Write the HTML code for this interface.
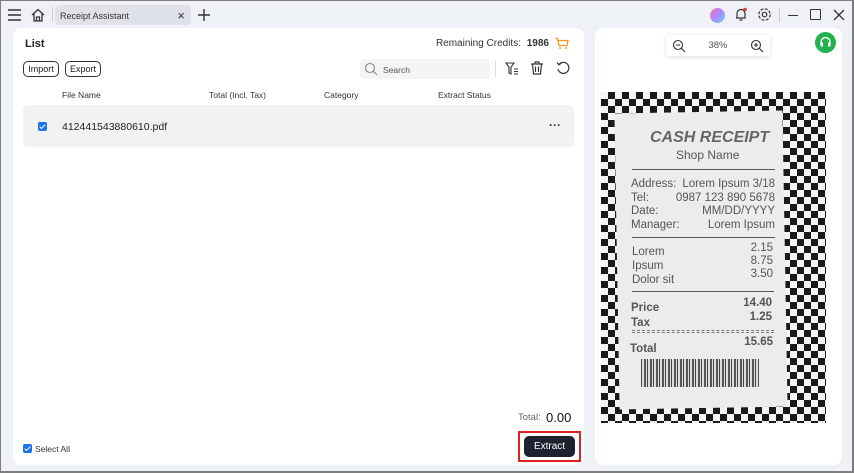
<!DOCTYPE html>
<html><head><style>
*{box-sizing:border-box;margin:0;padding:0}
body{width:854px;height:473px;overflow:hidden;font-family:"Liberation Sans",sans-serif;background:#7d7d7d;position:relative}
.win{position:absolute;left:1px;top:1px;width:851px;height:470px;background:#eef1f6}
.abs{position:absolute}
.panel{position:absolute;background:#fff;border-radius:8px}
.btn{position:absolute;border:1px solid #333;border-radius:5px;font-size:9px;color:#222;height:16px;line-height:14px;text-align:center}
.hdr{position:absolute;top:90px;font-size:8.5px;color:#333}
svg{position:absolute}
.chk{position:absolute;width:9px;height:9px;background:#1a73e8;border-radius:2px}
.chk:after{content:"";position:absolute;left:3px;top:1px;width:2px;height:5px;border:solid #fff;border-width:0 1.5px 1.5px 0;transform:rotate(45deg)}
.rc{position:absolute;font-family:"Liberation Sans",sans-serif;color:#555;font-size:11.5px}
</style></head><body>
<div class="win"></div>
<svg style="left:8px;top:9px" width="14" height="12"><path d="M0 1H13M0 6H13M0 11H13" stroke="#333" stroke-width="1.4"/></svg>
<svg style="left:31px;top:8px" width="14" height="14"><path d="M1 7L7 1.5L13 7M3 5.5V13H11V5.5M5.5 13V9H8.5V13" fill="none" stroke="#333" stroke-width="1.3"/></svg>
<div class="abs" style="left:52px;top:7px;width:1px;height:15px;background:#ccc"></div>
<div class="abs" style="left:55px;top:5px;width:136px;height:20px;background:#dfe2e8;border-radius:5px;font-size:9px;color:#333;padding:6px 0 0 5px">Receipt Assistant<span style="position:absolute;right:6px;top:3px;font-size:13px">×</span></div>
<svg style="left:197px;top:8px" width="14" height="14"><path d="M7 1V13M1 7H13" stroke="#333" stroke-width="1.4"/></svg>
<div class="abs" style="left:710px;top:8px;width:15px;height:15px;border-radius:50%;background:linear-gradient(135deg,#f7a,#a8f,#7cf)"></div>
<svg style="left:734px;top:7px" width="14" height="15"><path d="M3 11V6.5A4 4 0 0 1 11 6.5V11H2M5.5 13H8.5" fill="none" stroke="#333" stroke-width="1.2"/><circle cx="11" cy="2.5" r="1.8" fill="#e33"/></svg>
<svg style="left:757px;top:7px" width="15" height="15"><circle cx="7.5" cy="7.5" r="2.3" fill="none" stroke="#333" stroke-width="1.2"/><circle cx="7.5" cy="7.5" r="5.7" fill="none" stroke="#333" stroke-width="1.2" stroke-dasharray="3 1.5"/></svg>
<div class="abs" style="left:779px;top:8px;width:1px;height:14px;background:#ccc"></div>
<div class="abs" style="left:788px;top:15px;width:10px;height:1.3px;background:#333"></div>
<div class="abs" style="left:810px;top:9px;width:11px;height:11px;border:1.3px solid #333;border-radius:1px"></div>
<svg style="left:833px;top:9px" width="12" height="12"><path d="M1 1L11 11M11 1L1 11" stroke="#333" stroke-width="1.3"/></svg>
<div class="panel" style="left:13px;top:28px;width:571px;height:437px"></div>
<div class="abs" style="left:25px;top:38px;font-size:11px;font-weight:bold;color:#222">List</div>
<div class="abs" style="left:400px;top:38px;width:149px;text-align:right;font-size:10px;color:#333;white-space:nowrap">Remaining Credits: <b style="margin-left:3px">1986</b></div>
<svg style="left:555px;top:37px" width="14" height="13"><path d="M0.5 1.5H2.5L4 8.5H12L13 3.5H3" fill="none" stroke="#f39a1e" stroke-width="1.3"/><circle cx="5" cy="11" r="1" fill="#f39a1e"/><circle cx="11" cy="11" r="1" fill="#f39a1e"/></svg>
<div class="btn" style="left:23px;top:61px;width:36px">Import</div>
<div class="btn" style="left:65px;top:61px;width:36px">Export</div>
<div class="abs" style="left:360px;top:59px;width:130px;height:20px;background:#f3f4f6;border-radius:4px;font-size:8.5px;color:#555;padding:6px 0 0 23px">Search</div>
<svg style="left:364px;top:62px" width="14" height="14"><circle cx="6" cy="6" r="4.5" fill="none" stroke="#888" stroke-width="1.1"/><path d="M9.3 9.3L13 13" stroke="#888" stroke-width="1.1"/></svg>
<div class="abs" style="left:495px;top:61px;width:1px;height:16px;background:#ddd"></div>
<svg style="left:505px;top:62px" width="14" height="13"><path d="M1 1H9L6 5V12L4 11V5Z" fill="none" stroke="#333" stroke-width="1.1"/><path d="M9 7H13M9 9.5H13M9 12H13" stroke="#333" stroke-width="1"/></svg>
<svg style="left:530px;top:61px" width="14" height="14"><path d="M1 3H13M5 3V1H9V3M2.5 3L3.5 13H10.5L11.5 3M5.5 5.5V11M8.5 5.5V11" fill="none" stroke="#333" stroke-width="1.2"/></svg>
<svg style="left:556px;top:61px" width="14" height="14"><path d="M3 3.5A5.5 5.5 0 1 1 2 8" fill="none" stroke="#333" stroke-width="1.2"/><path d="M1 1.5L3 3.8L5.5 2" fill="none" stroke="#333" stroke-width="1.2"/></svg>
<div class="hdr" style="left:62px">File Name</div>
<div class="hdr" style="left:209px">Total (Incl. Tax)</div>
<div class="hdr" style="left:324px">Category</div>
<div class="hdr" style="left:438px">Extract Status</div>
<div class="abs" style="left:23px;top:105px;width:551px;height:42px;background:#f2f2f3;border-radius:5px"></div>
<div class="chk" style="left:38px;top:122px"></div>
<div class="abs" style="left:62px;top:121px;font-size:10.5px;color:#222">412441543880610.pdf</div>
<div class="abs" style="left:549px;top:118px;font-size:12px;font-weight:bold;color:#333">···</div>
<div class="abs" style="left:518px;top:412px;font-size:9.5px;color:#666">Total:</div>
<div class="abs" style="left:546px;top:410px;font-size:13px;color:#111">0.00</div>
<div class="chk" style="left:23px;top:444px"></div>
<div class="abs" style="left:35px;top:444px;font-size:8.5px;color:#333">Select All</div>
<div class="abs" style="left:518px;top:431px;width:63px;height:31px;border:2px solid #d22"></div>
<div class="abs" style="left:524px;top:436px;width:51px;height:21px;background:#1e2230;border-radius:5px;color:#fff;font-size:10px;text-align:center;line-height:21px">Extract</div>
<div class="panel" style="left:595px;top:28px;width:247px;height:437px"></div>
<div class="abs" style="left:666px;top:35px;width:104px;height:21px;background:#fff;border-radius:3px;box-shadow:0 1px 4px rgba(0,0,0,.15);font-size:9.5px;color:#555;text-align:center;line-height:21px">38%</div>
<svg style="left:672px;top:39px" width="14" height="14"><circle cx="6" cy="6" r="4.5" fill="none" stroke="#333" stroke-width="1.1"/><path d="M9.3 9.3L13 13M4 6H8" stroke="#333" stroke-width="1.1"/></svg>
<svg style="left:750px;top:39px" width="14" height="14"><circle cx="6" cy="6" r="4.5" fill="none" stroke="#333" stroke-width="1.1"/><path d="M9.3 9.3L13 13M4 6H8M6 4V8" stroke="#333" stroke-width="1.1"/></svg>
<div class="abs" style="left:815px;top:32px;width:21px;height:21px;border-radius:50%;background:#22b14c"></div>
<svg style="left:819px;top:36px" width="13" height="13"><path d="M2 8V6A4.5 4.5 0 0 1 11 6V8" fill="none" stroke="#fff" stroke-width="1.4"/><rect x="1.5" y="6.5" width="2.5" height="4" fill="#fff"/><rect x="9" y="6.5" width="2.5" height="4" fill="#fff"/></svg>
<div class="abs" style="left:601px;top:92px;width:225px;height:331px;background:repeating-conic-gradient(#1a1a1a 0 25%,#f4f4f4 0 50%) 0 0/14px 14px"></div>
<div class="abs" style="left:617px;top:112px;width:168px;height:296px;background:#ececec;transform:rotate(-1deg)"></div>
<div class="rc" style="left:650px;top:129px;font-size:16px;font-weight:bold;font-style:italic;color:#666">CASH RECEIPT</div>
<div class="rc" style="left:676px;top:148px;font-size:12px">Shop Name</div>
<div class="abs" style="left:632px;top:169px;width:143px;height:1px;background:#555"></div>
<div class="rc" style="left:631px;top:178px;line-height:13.5px">Address:<br>Tel:<br>Date:<br>Manager:</div>
<div class="rc" style="left:670px;top:178px;width:105px;text-align:right;line-height:13.5px">Lorem Ipsum 3/18<br>0987 123 890 5678<br>MM/DD/YYYY<br>Lorem Ipsum</div>
<div class="abs" style="left:632px;top:237px;width:143px;height:1px;background:#555"></div>
<div class="rc" style="left:632px;top:245px;line-height:14px">Lorem<br>Ipsum<br>Dolor sit</div>
<div class="rc" style="left:740px;top:242px;width:33px;text-align:right;line-height:13px">2.15<br>8.75<br>3.50</div>
<div class="abs" style="left:632px;top:291px;width:142px;height:1px;background:#555"></div>
<div class="rc" style="left:631px;top:301px;font-weight:bold;line-height:15px">Price<br>Tax</div>
<div class="rc" style="left:730px;top:296px;width:42px;text-align:right;font-weight:bold;line-height:14px">14.40<br>1.25</div>
<div class="abs" style="left:632px;top:330px;width:142px;height:3px;border-top:1px dashed #777;border-bottom:1px dashed #777"></div>
<div class="rc" style="left:630px;top:343px;font-weight:bold">Total</div>
<div class="rc" style="left:735px;top:336px;width:38px;text-align:right;font-weight:bold">15.65</div>
<div class="abs" style="left:641px;top:359px;width:118px;height:28px;background:repeating-linear-gradient(90deg,#444 0 1px,#ddd 1px 3px,#555 3px 5px,#ddd 5px 6px)"></div>
</body></html>
